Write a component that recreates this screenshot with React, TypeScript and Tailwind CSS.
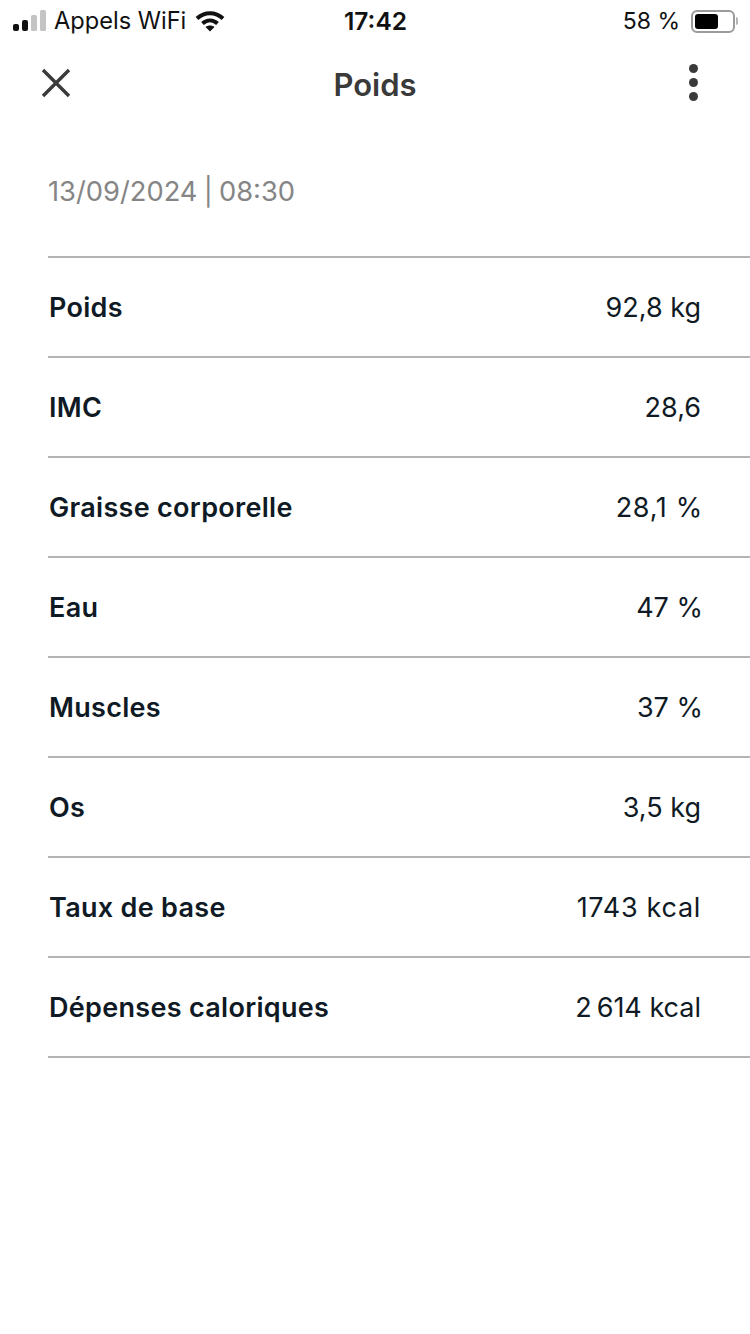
import React from "react";

const rows = [
  { label: "Poids", value: "92,8 kg", cls: "" },
  { label: "IMC", value: "28,6", cls: "" },
  { label: "Graisse corporelle", value: "28,1 %", cls: "mr-[-2px] tracking-[0.7px]" },
  { label: "Eau", value: "47 %", cls: "mr-[-2px]" },
  { label: "Muscles", value: "37 %", cls: "mr-[-2px]" },
  { label: "Os", value: "3,5 kg", cls: "" },
  { label: "Taux de base", value: "1743 kcal", cls: "tracking-[0.7px]" },
  { label: "Dépenses caloriques", value: "2\u2009614 kcal", cls: "" },
];

function StatusBar() {
  return (
    <div className="flex h-[42px] items-center justify-between pl-[13px] pr-[12px] text-[24px] leading-none text-[#111]">
      <div className="flex w-[240px] items-center">
        <svg width="34" height="22" viewBox="0 0 34 22" className="shrink-0">
          <rect x="0" y="14" width="6" height="7" rx="2" fill="#111" />
          <rect x="9" y="10" width="6" height="11" rx="2" fill="#111" />
          <rect x="18" y="5" width="6" height="16" rx="1.5" fill="#c4c4c4" />
          <rect x="27" y="0" width="6" height="21" rx="1.5" fill="#c4c4c4" />
        </svg>
        <span className="ml-[7px] text-[23.6px]">Appels WiFi</span>
        <svg width="30" height="22" viewBox="0 0 30 22" className="ml-[9px] shrink-0" fill="none" stroke="#111" strokeWidth="4">
          <path d="M2 8.5C9.5 1.5 20.5 1.5 28 8.5" />
          <path d="M7.5 13.5C12 9.5 18 9.5 22.5 13.5" />
          <path d="M15 21.5 L10.5 17 C13 15 17 15 19.5 17 Z" fill="#111" stroke="none" />
        </svg>
      </div>
      <div className="text-[24.5px] font-semibold">17:42</div>
      <div className="flex w-[240px] items-center justify-end">
        <span className="text-[23px]">58 %</span>
        <div className="ml-[11px] flex h-[23px] w-[44px] items-center rounded-[6px] border-2 border-[#9b9b9b] p-[2px]">
          <div className="h-full w-[23px] rounded-[3px] bg-black" />
        </div>
        <div className="ml-[1px] h-[8px] w-[2px] rounded-r-sm bg-[#b5b5b5]" />
      </div>
    </div>
  );
}

export default function App() {
  return (
    <div className="min-h-[1334px] w-[750px] bg-white font-['Inter','Liberation_Sans',sans-serif]">
      <StatusBar />
      <div className="flex h-[86px] items-center justify-between pl-[40px] pr-[50px]">
        <div className="mb-[4px] w-[32px]">
          <svg width="32" height="32" viewBox="0 0 32 32" fill="none" stroke="#3a3a3a" strokeWidth="3.4">
            <path d="M3 3 L29 29 M29 3 L3 29" />
          </svg>
        </div>
        <div className="ml-[-10px] text-[31px] font-semibold text-[#3a3a3a]">Poids</div>
        <div className="mb-[5px] flex w-[12px] flex-col items-center gap-[5px]">
          <div className="h-[9px] w-[9px] rounded-full bg-[#3a3a3a]" />
          <div className="h-[9px] w-[9px] rounded-full bg-[#3a3a3a]" />
          <div className="h-[9px] w-[9px] rounded-full bg-[#3a3a3a]" />
        </div>
      </div>
      <div className="pl-[48px] pt-[46px] text-[27.3px] leading-[36px] text-[#858585] [word-spacing:-1.5px]">13/09/2024 | 08:30</div>
      <div className="ml-[48px] mt-[46px] border-t-2 border-[#b4b4b4]">
        {rows.map((r) => (
          <div key={r.label} className="flex h-[100px] items-center justify-between border-b-2 border-[#b4b4b4] pl-[1px] pr-[49px] pt-[2px] text-[27px] text-[#0f1a24]">
            <span className="font-semibold tracking-[0.3px]">{r.label}</span>
            <span className={r.cls}>{r.value}</span>
          </div>
        ))}
      </div>
    </div>
  );
}
